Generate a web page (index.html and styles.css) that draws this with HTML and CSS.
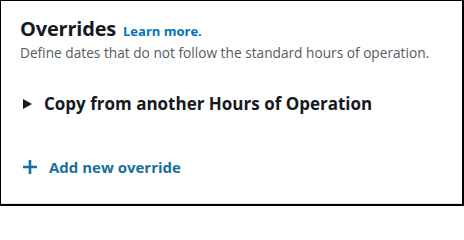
FILE: index.html
```html
<!DOCTYPE html>
<html>
<head>
<meta charset="utf-8">
<link rel="stylesheet" href="styles.css">
</head>
<body>
<div class="panel">
  <div class="header">
    <h2 class="title">Overrides</h2>
    <a class="learn" href="#">Learn more.</a>
  </div>
  <p class="desc">Define dates that do not follow the standard hours of operation.</p>
  <div class="expander">
    <svg class="caret" width="9" height="10" viewBox="0 0 9 10"><path d="M0 0 L9 5 L0 10 Z" fill="#16191f"/></svg>
    <span class="exp-label">Copy from another Hours of Operation</span>
  </div>
  <div class="add">
    <svg class="plus" width="14" height="14" viewBox="0 0 14 14"><path d="M7 0 V14 M0 7 H14" stroke="currentColor" stroke-width="2.6"/></svg>
    <span class="add-label">Add new override</span>
  </div>
</div>
</body>
</html>
```
FILE: styles.css
```css
html, body {
  margin: 0;
  padding: 0;
  background: #fff;
}
.panel {
  box-sizing: border-box;
  width: 464px;
  height: 206px;
  border-top: 1px solid #000;
  border-left: 1px solid #000;
  border-right: 2px solid #000;
  border-bottom: 2px solid #000;
  box-shadow: inset 0 -1px 0 #e6e6e6;
  padding: 15px 0 0 19px;
  font-family: "Open Sans", sans-serif;
  color: #16191f;
}
.header {
  display: flex;
  align-items: baseline;
  gap: 7px;
}
.title {
  margin: 0;
  font-size: 20px;
  font-weight: 700;
  line-height: 26px;
  letter-spacing: -0.2px;
}
.learn {
  font-size: 13px;
  font-weight: 700;
  color: #0073bb;
  text-decoration: none;
}
.desc {
  margin: 2px 0 0;
  font-size: 13.7px;
  line-height: 18px;
  color: #545b64;
}
.expander {
  display: flex;
  align-items: center;
  gap: 12px;
  margin-top: 31px;
  padding-left: 3px;
}
.exp-label {
  font-size: 17px;
  font-weight: 700;
  line-height: 22px;
}
.add {
  display: flex;
  align-items: center;
  gap: 12px;
  margin-top: 42px;
  padding-left: 3px;
  color: #1a6e9b;
}
.add-label {
  font-size: 15px;
  font-weight: 700;
  line-height: 20px;
}
```
